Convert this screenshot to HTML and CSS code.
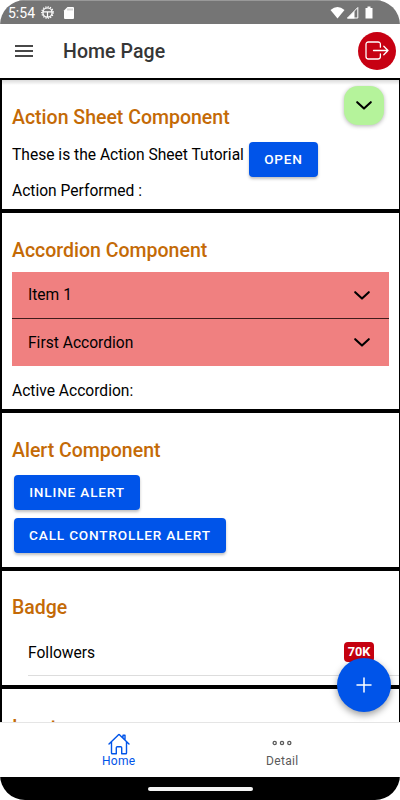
FILE: index.html
```html
<!DOCTYPE html>
<html lang="en">
<head>
<meta charset="utf-8">
<title>Home Page</title>
<link rel="stylesheet" href="styles.css">
</head>
<body>
<div class="phone">
  <div class="status">
    <span class="clock">5:54</span>
    <svg class="gear" viewBox="0 0 14 14" fill="none" stroke="#fff"><circle cx="7" cy="7" r="5" stroke-width="1.5"/><circle cx="7" cy="7" r="6.2" stroke-width="1.3" stroke-dasharray="1.3 1.3"/><path d="M2 6.3h10M7 6.5V12" stroke-width="1.3"/></svg>
    <svg class="sd" viewBox="0 0 10 12"><path d="M3.5 0H9q1 0 1 1v10q0 1-1 1H1q-1 0-1-1V3.5z" fill="#fff"/><path d="M4 1.5v2M6 1.5v2M8 1.5v2" stroke="#999" stroke-width=".8"/></svg>
    <svg class="signals" viewBox="0 0 44 14"><path d="M.5 4Q7.500-1.800 14.500 4L7.500 12.500z" fill="#fff"/><path d="M17.500 12L27.800 1.500V12z" fill="none" stroke="#fff"/><path d="M17 12.500L24.500 5v7.500z" fill="#fff"/><path d="M35.500 2h2V.5h3V2h2v10.500h-7z" fill="#fff"/></svg>
  </div>
  <header class="toolbar">
    <svg class="menu" viewBox="0 0 18 12"><path d="M0 1h18M0 6h18M0 11h18" stroke="#484848" stroke-width="1.900"/></svg>
    <h1 class="title">Home Page</h1>
    <span class="logout"><svg viewBox="0 0 24 20" fill="none" stroke="#fff" stroke-width="1.300" stroke-linecap="round" stroke-linejoin="round"><path d="M15.400 6.200V3.500q0-2.500-2.500-2.500H3.500Q1 1 1 3.500v12Q1 18 3.500 18h9.400q2.500 0 2.500-2.500v-2.700M8.500 9.500H23M18.800 5.200L23 9.500l-4.200 4.300"/></svg></span>
  </header>
  <main class="content">
    <section class="card action">
      <h2>Action Sheet Component</h2>
      <div class="row"><span class="tutorial">These is the Action Sheet Tutorial</span><button class="btn open">OPEN</button></div>
      <p class="performed">Action Performed :</p>
    </section>
    <section class="card accordion">
      <h2>Accordion Component</h2>
      <div class="item"><span class="item-one">Item 1</span><svg class="chev" viewBox="0 0 16 9"><path d="M1.200 1.200L8 7.600l6.800-6.400"/></svg></div>
      <div class="item"><span class="item-first">First Accordion</span><svg class="chev" viewBox="0 0 16 9"><path d="M1.200 1.200L8 7.600l6.800-6.400"/></svg></div>
      <p class="active-text">Active Accordion:</p>
    </section>
    <section class="card alert">
      <h2>Alert Component</h2>
      <button class="btn inline">INLINE ALERT</button>
      <button class="btn call">CALL CONTROLLER ALERT</button>
    </section>
    <section class="card badges">
      <h2>Badge</h2>
      <div class="follow"><span class="follow-text">Followers</span><span class="badge">70K</span></div>
    </section>
    <section class="card input">
      <h2>Input</h2>
    </section>
    <span class="fab-top"><svg class="chev" viewBox="0 0 16 9"><path d="M1.200 1.200L8 7.600l6.800-6.400"/></svg></span>
    <span class="fab"><svg viewBox="0 0 16 16"><path d="M8 1v14M1 8h14" stroke="#fff" stroke-width="1.500" stroke-linecap="round"/></svg></span>
  </main>
  <nav class="tabs">
    <div class="tab selected"><svg class="tab-icon" viewBox="0 0 22 22" fill="none" stroke="#0054e9" stroke-width="1.400" stroke-linecap="round" stroke-linejoin="round"><path d="M3.500 9v11q0 .800.800.800H8.300v-6q0-1 1-1h3.400q1 0 1 1v6h4q.800 0 .800-.800V9M1 11l9.300-9.100q.700-.600 1.400 0L21 11M17 7V2.200h-2v2.700"/></svg><span class="tab-label">Home</span></div>
    <div class="tab"><svg class="tab-icon" viewBox="0 0 22 22" fill="none" stroke="#5a5a5a" stroke-width="1.300"><circle cx="3.700" cy="10" r="1.600"/><circle cx="11" cy="10" r="1.600"/><circle cx="18.300" cy="10" r="1.600"/></svg><span class="tab-label">Detail</span></div>
  </nav>
  <div class="gesture"><span class="pill"></span></div>
</div>
</body>
</html>
```
FILE: styles.css
```css
* { box-sizing: border-box; }
body { margin: 0; background: #fff; font-family: Roboto, sans-serif; font-size: 15.600px; color: #000; }
h1, h2, p { margin: 0; }
svg { display: block; flex: none; overflow: visible; }
.phone { width: 400px; height: 800px; display: flex; flex-direction: column; overflow: hidden; border-radius: 25px; background: #fff; }
.status { height: 24px; flex: none; background: #757575; color: #fff; display: flex; align-items: center; padding: 0 27px 0 8px; border-top: 1px solid #999; }
.clock { width: 27px; font-size: 14px; line-height: 24px; white-space: nowrap; }
.gear { width: 13px; height: 13px; margin-left: 6px; }
.sd { width: 10px; height: 12px; margin-left: 10px; }
.signals { width: 44px; height: 14px; margin-left: auto; margin-right: -1px; }
.toolbar { height: 54px; flex: none; display: flex; align-items: center; padding: 0 4.500px 0 15px; background: #fff; }
.menu { width: 18px; height: 12px; }
.title { margin-left: 30px; padding-top: 1px; font-size: 19.500px; line-height: 24px; font-weight: 500; letter-spacing: .08px; color: #363636; white-space: nowrap; }
.logout { width: 38px; height: 38px; margin-left: auto; border-radius: 50%; background: #c70012; display: flex; align-items: center; justify-content: center; }
.logout svg { width: 24px; height: 20px; }
.content { height: 644px; flex: none; position: relative; overflow: hidden; }
.content::before { content: ""; position: absolute; top: 2px; left: 2px; right: 1px; height: 5px; background: linear-gradient(rgba(0,0,0,.14), transparent); }
.card { border: 2px solid #000; border-right-width: 1.500px; padding: 26px 10px 0 10px; }
.card h2 { font-size: 19.500px; line-height: 24px; font-weight: 500; color: #c46a06; white-space: nowrap; }
.action { height: 133px; }
.accordion { height: 200px; }
.alert { height: 158px; }
.badges { height: 118px; padding-top: 25px; }
.input { height: 140px; padding-top: 27px; }
.row { display: flex; height: 52px; padding-top: 12px; align-items: flex-start; }
.tutorial { width: 237px; padding-top: 1px; line-height: 24px; white-space: nowrap; }
.btn { display: block; height: 35px; border: 0; border-radius: 4px; padding: 0; background: #0054e9; color: #fff; font: 500 13.600px/35px Roboto, sans-serif; letter-spacing: .82px; text-align: center; white-space: nowrap; box-shadow: 0 2px 3px rgba(0,0,0,.25); }
.open { width: 69px; }
.inline { width: 126px; margin: 12px 0 0 2px; }
.call { width: 212px; margin: 8px 0 0 2px; }
.performed { line-height: 24px; margin-top: -3px; }
.item { height: 47px; padding: 0 19px 0 16px; background: #f08080; display: flex; align-items: center; justify-content: space-between; }
.accordion h2 + .item { margin-top: 9px; border-bottom: 1px solid #401c1c; }
.chev { width: 16px; height: 9px; fill: none; stroke: #000; stroke-width: 2.100; stroke-linecap: round; stroke-linejoin: round; }
.active-text { line-height: 24px; margin-top: 13px; }
.follow { height: 47px; margin: 9px -10px 0 16px; padding-right: 25px; display: flex; align-items: center; justify-content: space-between; border-bottom: 1px solid #ddd; }
.follow-text { padding-top: 2px; }
.badge { width: 30px; height: 20px; border-radius: 4px; background: #c5000f; color: #fff; font-size: 12.700px; font-weight: 700; line-height: 20px; text-align: center; }
.fab-top { position: absolute; left: 344px; top: 8px; width: 40px; height: 39px; border-radius: 14px; background: #b5f39b; display: flex; align-items: center; justify-content: center; box-shadow: 0 1px 4px rgba(0,0,0,.3); }
.fab { position: absolute; left: 337px; top: 580px; width: 54px; height: 54px; border-radius: 50%; background: #0054e9; display: flex; align-items: center; justify-content: center; box-shadow: 0 3px 7px rgba(0,0,0,.38); }
.fab svg { width: 16px; height: 16px; }
.tabs { height: 55px; flex: none; display: flex; justify-content: center; border-top: 1px solid #e5e5e5; background: #fff; padding-left: 1px; }
.tab { width: 163.500px; display: flex; flex-direction: column; align-items: center; color: #5a5a5a; padding-top: 10px; }
.selected { color: #0054e9; }
.tab-icon { width: 22px; height: 22px; }
.tab-label { font-size: 12px; line-height: 14px; margin-top: -1px; letter-spacing: .3px; }
.gesture { height: 23px; flex: none; background: #000; display: flex; justify-content: center; padding-top: 10px; }
.pill { width: 105px; height: 4px; border-radius: 2px; background: #f4f4f4; }
```
